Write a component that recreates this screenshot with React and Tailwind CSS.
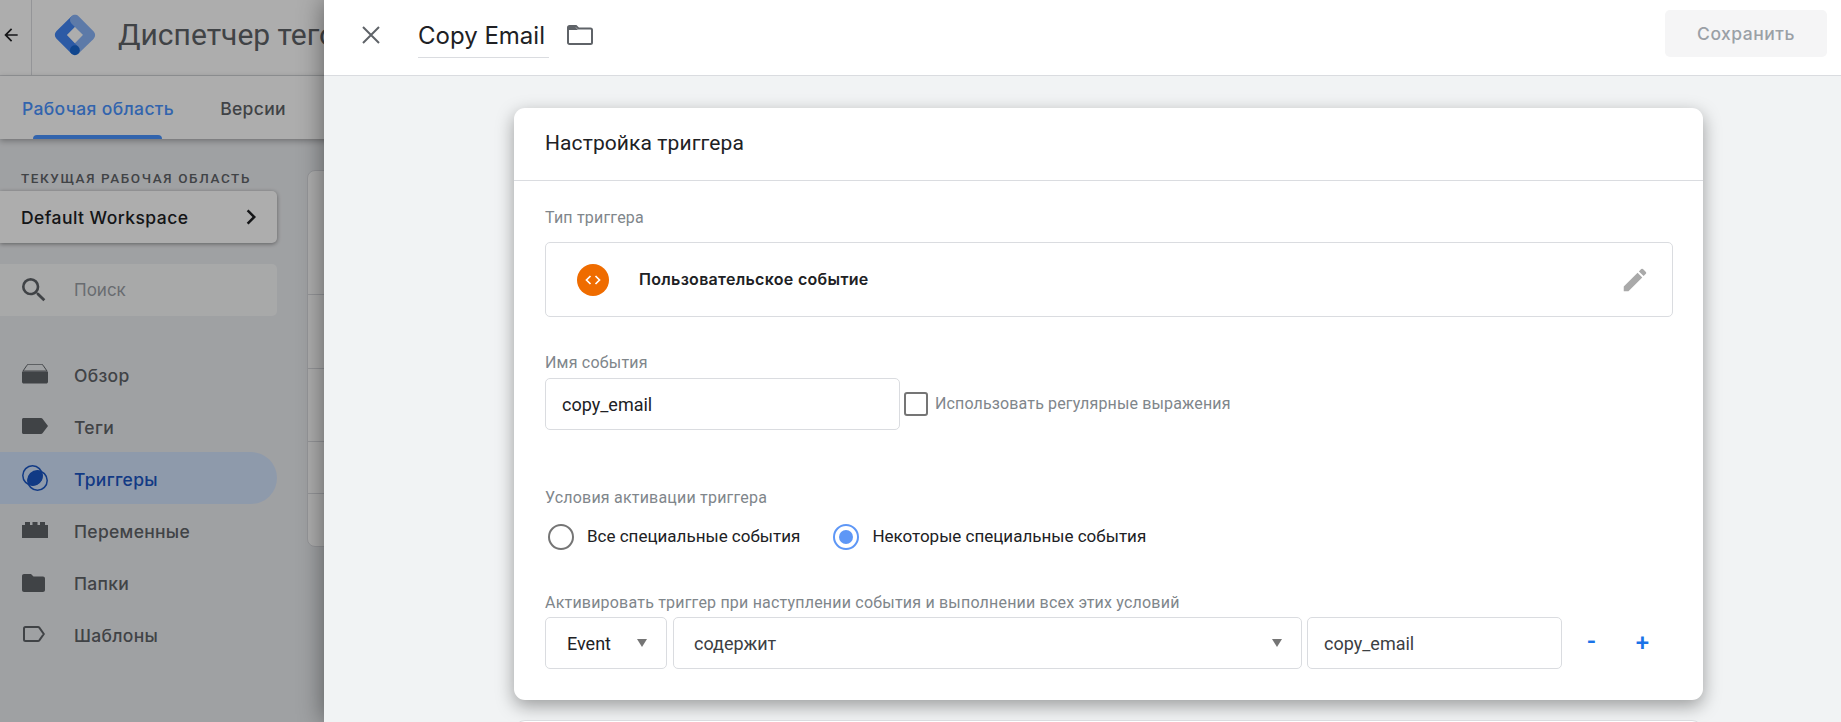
import React from "react";

const gs = "font-['Inter','Noto_Sans',sans-serif]";
const rb = "font-['Roboto','Liberation_Sans',sans-serif]";

function Logo() {
  return (
    <svg viewBox="0 0 192 192" className="w-[44px] h-[44px] shrink-0">
      <path d="M111.31 176.79L80.76 147l65.61-67L178 112Z" fill="#8AB4F8" />
      <path d="M111.44 45.08 81 14 14.44 79.93c-8.58 8.58-8.58 22.49 0 31.09L80 177l31-29-50.5-52.2L111.44 45.08z" fill="#4285F4" />
      <path d="M177.56 80.44 111.56 14.44c-8.59-8.59-22.52-8.59-31.11 0-8.59 8.59-8.59 22.52 0 31.11l66 66c8.59 8.59 22.52 8.59 31.11 0 8.59-8.59 8.59-22.52 0-31.11z" fill="#8AB4F8" />
      <circle cx="95.5" cy="162.5" r="21.5" fill="#1967D2" />
    </svg>
  );
}

const icons = {
  overview: (
    <svg viewBox="0 0 26 20" className="w-[26px] h-[20px]">
      <path d="M1 7 5 1.2C5.4.6 6 .2 6.8.2h12.4c.8 0 1.4.4 1.8 1L25 7H1Z" fill="none" stroke="#5f6368" strokeWidth="1" />
      <path d="M0 7.5h26v10.3c0 1-.8 1.8-1.8 1.8H1.8C.8 19.6 0 18.8 0 17.8V7.5Z" fill="#5f6368" />
    </svg>
  ),
  tag: (
    <svg viewBox="0 0 26 16" className="w-[26px] h-[16px]">
      <path d="M1.5 0H19c.6 0 1.2.3 1.5.8L26 8l-5.5 7.2c-.3.5-.9.8-1.500.8H1.500C.7 16 0 15.300 0 14.500v-13C0 .7.7 0 1.500 0Z" fill="#5f6368" />
    </svg>
  ),
  trigger: (
    <svg viewBox="0 0 26 26" className="w-[26px] h-[26px]">
      <circle cx="10.5" cy="10.5" r="9.7" fill="none" stroke="#1a56c4" strokeWidth="1.5" />
      <circle cx="15.5" cy="15.5" r="9.7" fill="none" stroke="#1a56c4" strokeWidth="1.5" />
      <path d="M19.6 6.7A9.7 9.7 0 0 0 6.7 19.6 9.7 9.7 0 0 0 19.6 6.7Z" fill="#1a56c4" />
    </svg>
  ),
  variable: (
    <svg viewBox="0 0 26 16" className="w-[26px] h-[16px]">
      <path d="M0 3h3V0h5v3h2.500V0h5v3H18V0h5v3h3v13H0V3Z" fill="#5f6368" />
    </svg>
  ),
  folder: (
    <svg viewBox="0 0 23 18" className="w-[23px] h-[18px] mt-[2px]">
      <path d="M2 0h7l2.500 2.500H21c1.100 0 2 .9 2 2V16c0 1.100-.9 2-2 2H2c-1.100 0-2-.9-2-2V2C0 .9.9 0 2 0Z" fill="#5f6368" />
    </svg>
  ),
  template: (
    <svg viewBox="0 0 22 16" className="w-[22px] h-[16px] ml-[1px]">
      <path d="M2.500 1H15c.5 0 1 .2 1.300.6L20.800 8l-4.500 6.400c-.3.400-.8.600-1.300.600H2.500C1.700 15 1 14.300 1 13.500v-11C1 1.700 1.700 1 2.500 1Z" fill="none" stroke="#5f6368" strokeWidth="2" />
    </svg>
  ),
};

function NavItem({ icon, label, active }) {
  return (
    <div className={`h-[52px] w-[277px] flex items-center rounded-r-full ${active ? "bg-[#d2e3fc]" : ""}`}>
      <div className="w-[74px] pl-[22px] flex items-center">{icons[icon]}</div>
      <span className={`${gs} pt-[4px] text-[17.5px] tracking-[0.3px] font-medium ${active ? "text-[#1a56c4]" : "text-[#5f6368]"}`}>{label}</span>
    </div>
  );
}

function Background() {
  return (
    <div className="w-full h-[722px] flex flex-col bg-[#ebedf0]">
      <header className="h-[76px] shrink-0 flex items-center bg-white border-b border-[#dadce0]">
        <div className="w-[32px] h-full flex items-center pl-[1px] pb-[6px] border-r border-[#dadce0]">
          <svg viewBox="0 0 24 24" className="w-[20px] h-[20px]">
            <path d="M20 11H7.830l5.590-5.590L12 4l-8 8 8 8 1.410-1.410L7.830 13H20v-2Z" fill="#202124" />
          </svg>
        </div>
        <div className="pl-[21px] pr-[21px] pb-[6px]"><Logo /></div>
        <span className={`${rb} pb-[6px] text-[30px] text-[#5f6368] whitespace-nowrap`}>Диспетчер тегов</span>
      </header>
      <nav className="h-[63px] shrink-0 bg-white flex shadow-[0_2px_6px_rgba(0,0,0,0.3)] relative">
        <div className={`ml-[22px] h-full flex items-center relative pt-[3px] ${gs} text-[17.5px] tracking-[0.35px] font-medium text-[#4a94ff]`}>
          Рабочая область
          <div className="absolute bottom-0 left-[11px] right-[12px] h-[4px] rounded-t-[4px] bg-[#4a94ff]" />
        </div>
        <div className={`ml-[46px] h-full flex items-center pt-[3px] ${gs} text-[17.5px] tracking-[0.35px] font-medium text-[#5f6368]`}>Версии</div>
      </nav>
      <div className="flex flex-1 min-h-0">
        <aside className="w-[277px] shrink-0 pt-[30px]">
          <div className={`pl-[21px] pt-[2px] h-[16px] flex items-center ${rb} text-[13.5px] font-medium tracking-[1.6px] text-[#5f6368] whitespace-nowrap`}>ТЕКУЩАЯ РАБОЧАЯ ОБЛАСТЬ</div>
          <div className="mt-[6px] h-[52px] bg-white rounded-r-[5px] shadow-[0_1px_4px_rgba(0,0,0,0.4)] flex items-center justify-between pl-[21px] pr-[11px]">
            <span className={`${gs} pt-[3px] text-[17.5px] tracking-[0.45px] font-medium text-[#202124]`}>Default Workspace</span>
            <svg viewBox="0 0 24 24" className="w-[30px] h-[30px]">
              <path d="M8.590 16.590 13.170 12 8.590 7.410 10 6l6 6-6 6-1.410-1.410Z" fill="#202124" />
            </svg>
          </div>
          <div className="mt-[21px] h-[52px] bg-[#f8f9fa] rounded-r-[5px] flex items-center pl-[18px]">
            <svg viewBox="0 0 24 24" className="w-[32px] h-[32px]">
              <path d="M15.500 14h-.790l-.280-.270A6.470 6.470 0 0 0 16 9.500 6.500 6.500 0 1 0 9.500 16c1.610 0 3.090-.590 4.230-1.570l.270.280v.790l5 4.990L20.490 19l-4.990-5Zm-6 0C7.010 14 5 11.990 5 9.500S7.010 5 9.500 5 14 7.010 14 9.500 11.990 14 9.500 14Z" fill="#5f6368" />
            </svg>
            <span className={`${gs} ml-[24px] pt-[2px] text-[17px] text-[#9aa0a6]`}>Поиск</span>
          </div>
          <div className="mt-[32px]">
            <NavItem icon="overview" label="Обзор" />
            <NavItem icon="tag" label="Теги" />
            <NavItem icon="trigger" label="Триггеры" active />
            <NavItem icon="variable" label="Переменные" />
            <NavItem icon="folder" label="Папки" />
            <NavItem icon="template" label="Шаблоны" />
          </div>
        </aside>
        <main className="flex-1 pl-[30px] pt-[31px]">
          <div className="h-[377px] bg-white border border-[#dadce0] rounded-l-[8px] flex flex-col">
            <div className="h-[124px] border-b border-[#dadce0]" />
            <div className="h-[74px] border-b border-[#dadce0]" />
            <div className="h-[73px] border-b border-[#dadce0]" />
            <div className="h-[52px] border-b border-[#dadce0]" />
          </div>
        </main>
      </div>
    </div>
  );
}

function Label({ className = "", children }) {
  return <div className={`h-[20px] flex items-center pt-[1px] ${rb} text-[16px] tracking-[0.2px] text-[#80868b] whitespace-nowrap ${className}`}>{children}</div>;
}

function Arrow() {
  return (
    <svg viewBox="0 0 10 8" className="w-[10px] h-[8px]">
      <path d="M0 0h10L5 8Z" fill="#757575" />
    </svg>
  );
}

function Field({ className = "", children }) {
  return (
    <div className={`h-[52px] shrink-0 flex items-center bg-white border border-[#dadce0] rounded-[5px] ${rb} text-[18px] ${className}`}>
      {children}
    </div>
  );
}

function Radio({ checked, label }) {
  return (
    <div className="flex items-center">
      <div className={`w-[26px] h-[26px] rounded-full border-[2px] flex items-center justify-center ${checked ? "border-[#5e97f6]" : "border-[#757575]"}`}>
        {checked && <div className="w-[14px] h-[14px] rounded-full bg-[#5e97f6]" />}
      </div>
      <span className={`ml-[13px] ${rb} text-[17px] text-[#202124]`}>{label}</span>
    </div>
  );
}

function Drawer() {
  return (
    <div className="absolute inset-y-0 left-[324px] right-0 flex flex-col bg-[#f1f3f4] shadow-[0_0_24px_rgba(0,0,0,0.45)] overflow-hidden">
      <header className="h-[76px] shrink-0 bg-white border-b border-[#dadce0] flex items-center pb-[6px]">
        <svg viewBox="0 0 18 18" className="ml-[38px] w-[18px] h-[18px]">
          <path d="M1 1l16 16M17 1 1 17" stroke="#5f6368" strokeWidth="2" fill="none" />
        </svg>
        <div className={`ml-[38px] mt-[1px] h-[45px] pt-[2px] w-[131px] border-b border-[#dadce0] flex items-center ${gs} text-[24px] text-[#202124] whitespace-nowrap`}>Copy Email</div>
        <svg viewBox="0 0 26 20" className="ml-[18px] w-[26px] h-[20px]">
          <path d="M2.500 1H9l2.500 2.500h12c.9 0 1.500.6 1.500 1.500v12.500c0 .9-.6 1.500-1.500 1.500h-21C1.600 19 1 18.400 1 17.500v-15C1 1.600 1.600 1 2.500 1Z" fill="none" stroke="#5f6368" strokeWidth="2" />
          <path d="M2 2h6.500L11 5H2Z" fill="#5f6368" />
        </svg>
        <div className={`ml-auto mr-[14px] -mt-[3px] h-[47px] pt-[2px] w-[162px] rounded-[5px] bg-[#f5f5f6] flex items-center justify-center ${gs} text-[17.5px] tracking-[0.5px] font-medium text-[#9aa0a6]`}>Сохранить</div>
      </header>
      <div className="flex-1 min-h-0 pl-[190px]">
        <section className="mt-[32px] w-[1189px] bg-white rounded-[11px] shadow-[0_6px_18px_rgba(0,0,0,0.36)]">
          <div className={`h-[73px] border-b border-[#dadce0] pl-[31px] flex items-center ${rb} text-[21px] tracking-[0.1px] text-[#202124]`}>Настройка триггера</div>
          <div className="pl-[31px] pr-[30px] pt-[26px] pb-[31px]">
            <Label>Тип триггера</Label>
            <div className="mt-[15px] h-[75px] border border-[#dadce0] rounded-[5px] flex items-center">
              <div className="ml-[31px] w-[32px] h-[32px] rounded-full bg-[#ef6c00] flex items-center justify-center">
                <svg viewBox="0 0 16 10" className="w-[16px] h-[10px]">
                  <path d="M5.500 1 1.500 5l4 4M10.500 1l4 4-4 4" stroke="#fff" strokeWidth="1.700" fill="none" />
                </svg>
              </div>
              <span className={`ml-[30px] pb-[2px] ${gs} text-[16px] font-semibold tracking-[0.3px] text-[#202124]`}>Пользовательское событие</span>
              <svg viewBox="0 0 24 24" className="ml-auto mr-[22px] w-[30px] h-[30px]">
                <path d="M3 17.250V21h3.750L17.810 9.940l-3.750-3.750L3 17.250ZM20.710 7.040a.996.996 0 0 0 0-1.410l-2.340-2.340a.996.996 0 0 0-1.410 0l-1.830 1.830 3.750 3.750 1.830-1.830Z" fill="#a9a9a9" />
              </svg>
            </div>
            <Label className="mt-[35px]">Имя события</Label>
            <div className="mt-[6px] flex items-center">
              <Field className="w-[355px] pl-[16px] text-[#202124]">copy_email</Field>
              <div className="ml-[4px] w-[24px] h-[24px] rounded-[3px] border-[2px] border-[#757575]" />
              <span className={`ml-[7px] ${rb} text-[16px] tracking-[0.14px] text-[#80868b]`}>Использовать регулярные выражения</span>
            </div>
            <Label className="mt-[57px]">Условия активации триггера</Label>
            <div className="mt-[16px] h-[28px] flex items-center pl-[3px] gap-[33px]">
              <Radio label="Все специальные события" />
              <Radio checked label="Некоторые специальные события" />
            </div>
            <Label className="mt-[41px]">Активировать триггер при наступлении события и выполнении всех этих условий</Label>
            <div className="mt-[5px] flex items-center">
              <Field className="w-[122px] pl-[21px] pr-[19px] justify-between text-[#202124]">Event<Arrow /></Field>
              <Field className="ml-[6px] w-[629px] pl-[20px] pr-[19px] justify-between text-[#3c4043]">содержит<Arrow /></Field>
              <Field className="ml-[5px] w-[255px] pl-[16px] text-[#3c4043]">copy_email</Field>
              <div className={`w-[29px] ml-[15px] text-center ${rb} text-[26px] font-medium text-[#1a73e8] leading-none -mt-[4px]`}>-</div>
              <div className={`w-[29px] ml-[22px] text-center ${rb} text-[24px] font-medium text-[#1a73e8] leading-none`}>+</div>
            </div>
          </div>
        </section>
        <section className="mt-[20px] w-[1189px] h-[60px] bg-white border border-[#dadce0] rounded-[11px]" />
      </div>
    </div>
  );
}

export default function App() {
  return (
    <div className="relative w-full h-[722px] overflow-hidden">
      <Background />
      <div className="absolute inset-0 bg-black/[0.32]" />
      <Drawer />
    </div>
  );
}
